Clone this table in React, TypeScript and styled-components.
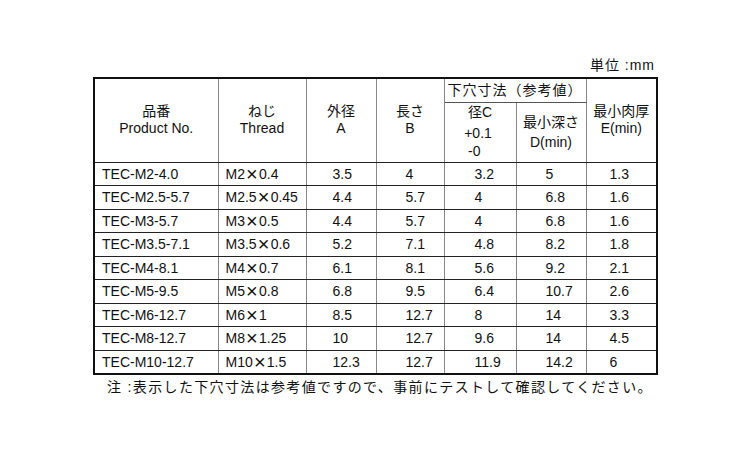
import React from "react";
import styled, { createGlobalStyle } from "styled-components";

const Global = createGlobalStyle`
  html, body { margin: 0; padding: 0; background: #fff; }
  body { font-family: "Liberation Sans", "Noto Sans CJK JP", sans-serif; color: #111; }
`;

const Page = styled.div`
  width: 750px;
  height: 450px;
  box-sizing: border-box;
  padding: 56px 0 0 93px;
`;

const Sheet = styled.div`
  width: 563px;
  display: flex;
  flex-direction: column;
`;

const Unit = styled.div`
  text-align: right;
  font-size: 14px;
  line-height: 19px;
  height: 21px;
  padding-right: 1px;
  letter-spacing: 1px;
`;

const Table = styled.table`
  border-collapse: collapse;
  table-layout: fixed;
  width: 563px;
  border: 2px solid #111;
  font-size: 14px;
`;

const HeadCell = styled.th<{ $bottom?: boolean }>`
  font-weight: normal;
  text-align: center;
  vertical-align: middle;
  padding: 0;
  line-height: 17px;
  border-left: 1px solid #888;
  border-right: 1px solid #888;
  border-bottom: 1px solid ${(p) => (p.$bottom ? "#555" : "#222")};
`;

const Line = styled.div<{ $lh?: number; $ls?: number }>`
  white-space: nowrap;
  ${(p) => (p.$lh ? `line-height: ${p.$lh}px;` : "")}
  ${(p) => (p.$ls ? `letter-spacing: ${p.$ls}px;` : "")}
`;

const Tol = styled.div`
  display: inline-block;
  text-align: left;
  line-height: 18px;
  margin-top: 3px;
  margin-left: -4px;
`;

const Row = styled.tr`
  height: 23.5px;
`;

const Cell = styled.td<{ $pad: number }>`
  padding: 0 0 0 ${(p) => p.$pad}px;
  text-align: left;
  white-space: nowrap;
  line-height: 16px;
  border-left: 1px solid #888;
  border-right: 1px solid #888;
  border-bottom: 1px solid #222;
`;

const Times = styled.span`
  display: inline-block;
  width: 14px;
  text-align: center;
  font-size: 20px;
  line-height: 14px;
  vertical-align: -2px;
  font-weight: 300;
`;

const Note = styled.div`
  font-size: 14px;
  line-height: 18px;
  padding: 3px 0 0 14px;
  letter-spacing: 1.35px;
  white-space: nowrap;
`;

const rows: string[][] = [
  ["TEC-M2-4.0", "M2×0.4", "3.5", "4", "3.2", "5", "1.3"],
  ["TEC-M2.5-5.7", "M2.5×0.45", "4.4", "5.7", "4", "6.8", "1.6"],
  ["TEC-M3-5.7", "M3×0.5", "4.4", "5.7", "4", "6.8", "1.6"],
  ["TEC-M3.5-7.1", "M3.5×0.6", "5.2", "7.1", "4.8", "8.2", "1.8"],
  ["TEC-M4-8.1", "M4×0.7", "6.1", "8.1", "5.6", "9.2", "2.1"],
  ["TEC-M5-9.5", "M5×0.8", "6.8", "9.5", "6.4", "10.7", "2.6"],
  ["TEC-M6-12.7", "M6×1", "8.5", "12.7", "8", "14", "3.3"],
  ["TEC-M8-12.7", "M8×1.25", "10", "12.7", "9.6", "14", "4.5"],
  ["TEC-M10-12.7", "M10×1.5", "12.3", "12.7", "11.9", "14.2", "6"],
];

const widths = [124, 88, 70, 68, 72, 70, 71];
const pads = [7, 7, 26, 29, 30, 29, 23];

function renderValue(v: string) {
  if (!v.includes("×")) return v;
  const [a, b] = v.split("×");
  return (
    <>
      {a}
      <Times>×</Times>
      {b}
    </>
  );
}

export default function App() {
  return (
    <>
      <Global />
      <Page>
        <Sheet>
          <Unit>単位 :mm</Unit>
          <Table>
            <colgroup>
              {widths.map((w, i) => (
                <col key={i} style={{ width: w }} />
              ))}
            </colgroup>
            <thead>
              <tr style={{ height: 24 }}>
                <HeadCell rowSpan={2}>
                  <Line>品番</Line>
                  <Line>Product No.</Line>
                </HeadCell>
                <HeadCell rowSpan={2}>
                  <Line>ねじ</Line>
                  <Line>Thread</Line>
                </HeadCell>
                <HeadCell rowSpan={2}>
                  <Line>外径</Line>
                  <Line>A</Line>
                </HeadCell>
                <HeadCell rowSpan={2}>
                  <Line>長さ</Line>
                  <Line>B</Line>
                </HeadCell>
                <HeadCell colSpan={2} $bottom>
                  <Line $ls={1}>下穴寸法（参考値）</Line>
                </HeadCell>
                <HeadCell rowSpan={2}>
                  <Line>最小肉厚</Line>
                  <Line>E(min)</Line>
                </HeadCell>
              </tr>
              <tr style={{ height: 60 }}>
                <HeadCell>
                  <Line>径C</Line>
                  <Tol>
                    <Line>+0.1</Line>
                    <Line>&nbsp;-0</Line>
                  </Tol>
                </HeadCell>
                <HeadCell>
                  <Line $lh={20}>最小深さ</Line>
                  <Line $lh={20}>D(min)</Line>
                </HeadCell>
              </tr>
            </thead>
            <tbody>
              {rows.map((r, i) => (
                <Row key={i}>
                  {r.map((v, j) => (
                    <Cell key={j} $pad={pads[j]}>
                      {renderValue(v)}
                    </Cell>
                  ))}
                </Row>
              ))}
            </tbody>
          </Table>
          <Note>注 :表示した下穴寸法は参考値ですので、事前にテストして確認してください。</Note>
        </Sheet>
      </Page>
    </>
  );
}
